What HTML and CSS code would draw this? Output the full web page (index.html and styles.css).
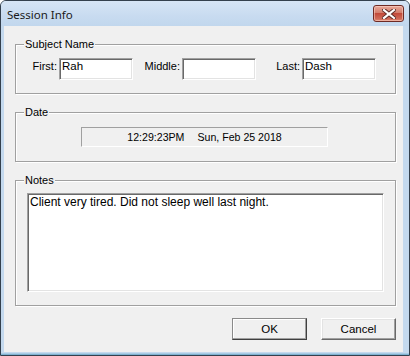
FILE: index.html
```html
<!DOCTYPE html>
<html>
<head>
<meta charset="utf-8">
<link rel="stylesheet" href="styles.css">
</head>
<body>
<div class="window">
  <div class="titlebar">
    <span class="title">Session Info</span>
    <div class="close-btn">
      <svg width="14" height="10" viewBox="0 0 14 10">
        <path d="M2 1 L12 9 M12 1 L2 9" stroke="#5a2a25" stroke-width="4" stroke-linecap="square"/>
        <path d="M2 1 L12 9 M12 1 L2 9" stroke="#ffffff" stroke-width="2.2" stroke-linecap="square"/>
      </svg>
    </div>
  </div>
  <div class="client">
    <div class="group subject">
      <span class="group-title">Subject Name</span>
      <div class="name-grid">
        <span class="lbl">First:</span><div class="edit">Rah</div>
        <span class="lbl">Middle:</span><div class="edit"></div>
        <span class="lbl">Last:</span><div class="edit">Dash</div>
      </div>
    </div>
    <div class="group date">
      <span class="group-title">Date</span>
      <div class="date-box"><span>12:29:23PM</span><span class="day">Sun, Feb 25 2018</span></div>
    </div>
    <div class="group notes">
      <span class="group-title">Notes</span>
      <div class="notes-area">Client very tired. Did not sleep well last night.</div>
    </div>
    <div class="buttons">
      <div class="btn default">OK</div>
      <div class="btn">Cancel</div>
    </div>
  </div>
</div>
</body>
</html>
```
FILE: styles.css
```css
html, body {
  margin: 0;
  padding: 0;
  background: #ffffff;
}
body {
  font-family: "Liberation Sans", Arial, sans-serif;
  font-size: 11px;
  color: #000;
}
.window {
  width: 410px;
  height: 356px;
  box-sizing: border-box;
  border: 1px solid #34404d;
  border-radius: 6px 6px 0 0;
  background: #c4d9ee;
  display: flex;
  flex-direction: column;
  padding: 0 6px 3px 3px;
  box-shadow: inset 0 -1px 0 #7fb2d2, inset 0 -2px 0 #a8cbe3;
}
.titlebar {
  height: 25px;
  margin: 0 -6px 0 -3px;
  padding: 0 5px 0 6px;
  display: flex;
  align-items: center;
  justify-content: space-between;
  background: linear-gradient(#d6e5f5, #c8dbf0 60%, #c1d7ed);
  border-radius: 5px 5px 0 0;
}
.title {
  font-family: "Noto Sans", "Open Sans", sans-serif;
  font-size: 11.5px;
  color: #1a1a1a;
  padding-top: 1px;
}
.close-btn {
  width: 29px;
  height: 15px;
  border: 1px solid #6e2a24;
  border-radius: 3px;
  background: linear-gradient(#e9a99a, #d37e6d 45%, #c24a3a 50%, #cf6a58 85%, #e08b72);
  box-shadow: inset 0 0 0 1px rgba(255,220,210,0.5);
  display: flex;
  align-items: center;
  justify-content: center;
}
.client {
  flex: 1;
  background: #f0f0f0;
  padding: 18px 7px 0 11px;
  display: flex;
  flex-direction: column;
}
.group {
  position: relative;
  border: 1px solid #a0a0a0;
  box-shadow: 1px 1px 0 #ffffff, inset 1px 1px 0 #ffffff;
}
.group-title {
  position: absolute;
  top: -7px;
  left: 8px;
  padding: 0 1px;
  background: #f0f0f0;
  line-height: 13px;
}
.subject {
  height: 48px;
}
.name-grid {
  display: grid;
  grid-template-columns: 43px 74px 49px 74px 46px 74px;
  align-items: start;
  padding-top: 13px;
}
.lbl {
  text-align: right;
  padding-right: 2px;
  padding-top: 2px;
  line-height: 13px;
}
.edit {
  height: 22px;
  box-sizing: border-box;
  background: #fff;
  border: 1px solid;
  border-color: #a0a0a0 #ffffff #ffffff #a0a0a0;
  box-shadow: inset 1px 1px 0 #696969, inset -1px -1px 0 #e3e3e3;
  padding: 1px 2px 0;
  line-height: 13px;
  font-size: 11.5px;
}
.date {
  margin-top: 18px;
  height: 48px;
}
.date-box {
  margin: 14px 0 0 65px;
  width: 247px;
  height: 20px;
  box-sizing: border-box;
  border: 1px solid;
  border-color: #a0a0a0 #ffffff #ffffff #a0a0a0;
  display: flex;
  justify-content: center;
  align-items: center;
  font-size: 10.6px;
}
.day {
  margin-left: 13px;
}
.notes {
  margin-top: 18px;
  height: 124px;
}
.notes-area {
  margin: 12px 11px 0 11px;
  height: 99px;
  box-sizing: border-box;
  background: #fff;
  border: 1px solid;
  border-color: #a0a0a0 #ffffff #ffffff #a0a0a0;
  box-shadow: inset 1px 1px 0 #696969, inset -1px -1px 0 #e3e3e3;
  padding: 2px 2px;
  line-height: 13px;
  font-size: 12px;
}
.buttons {
  margin-top: 12px;
  display: flex;
  justify-content: flex-end;
  gap: 14px;
}
.btn {
  width: 75px;
  height: 22px;
  box-sizing: border-box;
  border: 1px solid;
  border-color: #ffffff #696969 #696969 #ffffff;
  box-shadow: inset -1px -1px 0 #a0a0a0, inset 1px 1px 0 #e3e3e3;
  background: #f0f0f0;
  display: flex;
  align-items: center;
  justify-content: center;
  font-size: 11.5px;
}
.btn.default {
  border-color: #8a8a8a #404040 #404040 #8a8a8a;
  box-shadow: inset -1px -1px 0 #a0a0a0, inset 1px 1px 0 #ffffff;
}
```
